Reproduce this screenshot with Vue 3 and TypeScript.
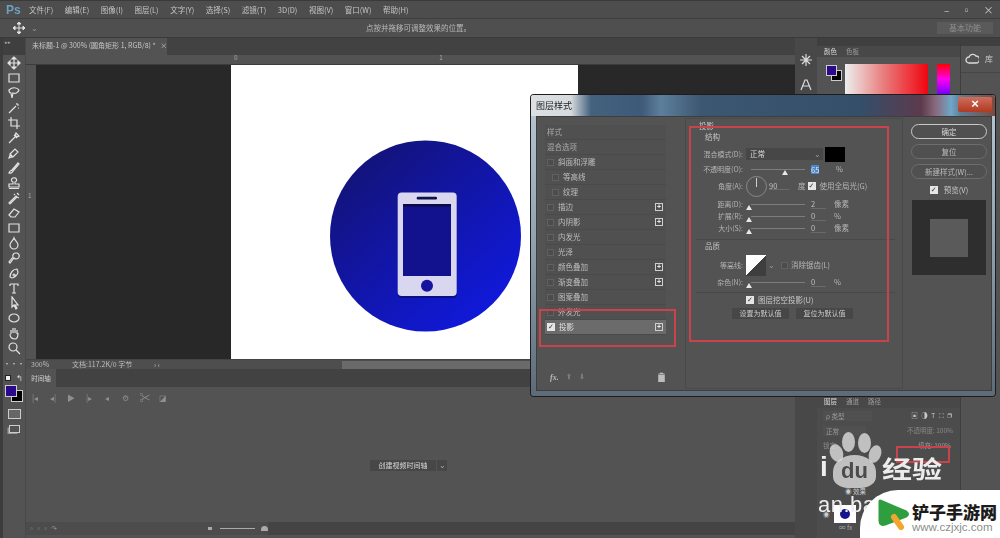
<script setup lang="ts">
const menus = ['文件(F)', '编辑(E)', '图像(I)', '图层(L)', '文字(Y)', '选择(S)', '滤镜(T)', '3D(D)', '视图(V)', '窗口(W)', '帮助(H)']

// toolbar icons, 14x14 viewBox
const tools: string[] = [
  'M7 1v12M1 7h12M7 1l-2 2h4zM7 13l-2-2h4zM1 7l2-2v4zM13 7l-2-2v4z',
  'M2 3h10v8H2z',
  'M2 4c3-3 8-3 10 0-1 3-4 4-6 3l-1 5-1-5C2 7 2 5 2 4z',
  'M2 12l7-7M10 2v2M12 4h-2M12 7h-1',
  'M4 1v9h9M1 4h9v9',
  'M2 12l6-6M7 4l3 3M9 2l3 3-2 1-2-2z',
  'M3 8l5-5 3 3-5 5zM2 12l3-1-2-2z',
  'M2 12c1-3 2-2 3-3l6-7 1 1-6 7c-1 1-1 3-4 2z',
  'M7 2a2 2 0 0 1 1 4v2h4v3H2V8h4V6a2 2 0 0 1 1-4zM2 12.5h10',
  'M2 12l7-7 1 1-7 7zM10 2l2 2M7 3l1 1M12 7l-2-1',
  'M2 9l5-6 5 3-4 5H4z',
  'M2 3h10v8H2z',
  'M7 2c1 3 4 4 4 7a4 4 0 0 1-8 0c0-3 3-4 4-7z',
  'M9 2a3 3 0 1 1-2 5L3 12 2 11l4-5a3 3 0 0 1 3-4z',
  'M3 11c0-4 3-8 7-8l1 3c0 3-4 6-6 6zM7 8a1 1 0 1 0 .1 0',
  'M3 3h8v2M7 3v9M5 12h4M3 3v2',
  'M5 1v10l2-2 2 4 1-1-2-3h3z',
  'M7 3c3 0 5 2 5 4s-2 4-5 4-5-2-5-4 2-4 5-4z',
  'M4 8V4M6 7V2M8 7V2M10 8V4M3 8c0 3 2 5 5 5 2 0 3-2 3-6',
  'M6 2a4 4 0 1 1 0 8 4 4 0 0 1 0-8zM9 9l4 4',
]

const styleRows = [
  { label: '斜面和浮雕', plus: false, sub: false },
  { label: '等高线', plus: false, sub: true },
  { label: '纹理', plus: false, sub: true },
  { label: '描边', plus: true, sub: false },
  { label: '内阴影', plus: true, sub: false },
  { label: '内发光', plus: false, sub: false },
  { label: '光泽', plus: false, sub: false },
  { label: '颜色叠加', plus: true, sub: false },
  { label: '渐变叠加', plus: true, sub: false },
  { label: '图案叠加', plus: false, sub: false },
  { label: '外发光', plus: false, sub: false },
]

const sliders = [
  { label: '距离(D):', value: '2', unit: '像素' },
  { label: '扩展(R):', value: '0', unit: '%' },
  { label: '大小(S):', value: '0', unit: '像素' },
]
</script>

<template>
  <div class="ps">
    <header class="menubar">
      <span class="logo">Ps</span>
      <span v-for="m in menus" :key="m" class="menu">{{ m }}</span>
      <span class="win-btns"><i>–</i><i>▫</i><i>×</i></span>
    </header>

    <div class="options">
      <svg class="opt-move" width="14" height="14" viewBox="0 0 14 14"><path d="M7 1v12M1 7h12M7 1l-2 2h4zM7 13l-2-2h4zM1 7l2-2v4zM13 7l-2-2v4z" stroke="#ddd" fill="#ddd" /></svg>
      <span class="opt-caret">⌄</span>
      <span class="opt-hint">点按并拖移可调整效果的位置。</span>
      <span class="workspace-name">基本功能</span>
    </div>

    <div class="workspace">
      <aside class="toolbar">
        <div class="tool-head">▸▸</div>
        <div v-for="(t, i) in tools" :key="i" class="tool">
          <svg width="14" height="14" viewBox="0 0 14 14"><path :d="t" fill="none" stroke="#e2e2e2" stroke-width="1.2" /></svg>
        </div>
        <div class="tool dots">•••</div>
        <div class="mini-colors"><i class="mini-a"></i><i class="mini-b">↰</i></div>
        <div class="swatches"><i class="bg"></i><i class="fg"></i></div>
        <div class="tool"><span class="mask-ico"></span></div>
        <div class="tool"><span class="screen-ico"></span></div>
      </aside>

      <main class="center">
        <div class="tabbar">
          <div class="doc-tab">未标题-1 @ 300% (圆角矩形 1, RGB/8) * <span class="tab-x">×</span></div>
        </div>
        <div class="h-ruler"><span class="r0">0</span><span class="r1">1</span></div>
        <div class="canvas-row">
          <div class="v-ruler"><span>1</span></div>
          <div class="pasteboard">
            <div class="doc">
              <svg width="347" height="294" viewBox="231 65 347 294">
                <defs>
                  <linearGradient id="disc" x1="0.15" y1="0.1" x2="0.85" y2="0.9">
                    <stop offset="0" stop-color="#131379" />
                    <stop offset="1" stop-color="#1019dc" />
                  </linearGradient>
                </defs>
                <circle cx="425.5" cy="236" r="95.5" fill="url(#disc)" />
                <rect x="398" y="194" width="59" height="104" rx="4" fill="#0a0a50" opacity="0.55" />
                <rect x="397.7" y="192.5" width="59" height="103.5" rx="4" fill="#d9d7ef" />
                <rect x="403" y="204" width="48" height="72" fill="#12128e" />
                <rect x="403" y="204" width="48" height="2.5" fill="#0b0b45" />
                <rect x="416.7" y="196.7" width="20.3" height="2.8" rx="1.2" fill="#10104a" />
                <circle cx="427" cy="285.7" r="6" fill="#1515a0" />
              </svg>
            </div>
          </div>
        </div>
        <div class="statusbar">
          <span class="zoom">300%</span>
          <span class="docinfo">文档:117.2K/0 字节</span>
          <span class="st-arrows">› ‹</span>
          <span class="scroll"></span>
        </div>
        <div class="timeline">
          <div class="tl-tabs"><span class="tl-tab">时间轴</span></div>
          <div class="tl-controls">
            <span>|◂</span><span>◂|</span><span>▶</span><span>|▸</span><span>◂</span><span>⚙</span><span class="sep">✂</span><span>◪</span>
          </div>
          <div class="tl-body">
            <div class="tl-create"><span class="create-btn">创建视频时间轴</span><span class="create-caret">⌄</span></div>
          </div>
          <div class="tl-foot">
            <span class="foot-left">▫▫▫ ↷</span>
            <span class="foot-zoom"><i class="m1"></i><i class="line"></i><i class="m2"></i></span>
            <span class="foot-dark"></span>
          </div>
        </div>
      </main>

      <div class="icon-dock">
        <svg width="14" height="14" viewBox="0 0 14 14"><path d="M7 1v12M1 7h12M3 3l8 8M11 3l-8 8" stroke="#ddd" stroke-width="1.2" /></svg>
        <svg width="14" height="14" viewBox="0 0 14 14"><path d="M2 12L6 2h2l4 10M4 8h6" stroke="#ddd" fill="none" stroke-width="1.2" /></svg>
      </div>

      <section class="panels">
        <div class="color-panel">
          <div class="panel-tabs dark"><span class="on">颜色</span><span>色板</span></div>
          <div class="color-body">
            <div class="color-chips"><i class="chip-bg"></i><i class="chip-fg"></i></div>
            <div class="color-field"></div>
            <div class="hue"></div>
          </div>
        </div>
        <div class="layers-panel">
          <div class="panel-tabs"><span class="on">图层</span><span>通道</span><span>路径</span></div>
          <div class="ly-row"><span class="ly-input">ρ 类型</span><span class="ly-icons">▣ ◑ T ⛶ ❐</span></div>
          <div class="ly-row"><span class="ly-input short">正常</span><span class="ly-dim">不透明度: 100%</span></div>
          <div class="ly-row"><span class="ly-dim">锁定:</span><span class="fill-label">填充: 100%</span></div>
          <div class="ly-list">
            <div class="ly-effect">◉ 效果</div>
            <div class="ly-thumb-row"><span class="eye">◉</span><span class="thumb"><i></i></span></div>
          </div>
          <div class="ly-foot">∞ fx</div>
        </div>
      </section>

      <aside class="library">
        <div class="lib-item">
          <svg width="14" height="12" viewBox="0 0 14 12"><path d="M4 10a3 3 0 0 1 0-6 4 4 0 0 1 7-1 3.500 3.500 0 0 1 0 7z" fill="none" stroke="#ddd" stroke-width="1.3" /></svg>
          <span>库</span>
        </div>
      </aside>
    </div>

    <!-- floating layer style dialog -->
    <div class="dialog">
      <div class="dlg-title">
        <span class="dlg-name">图层样式</span>
        <span class="dlg-close">×</span>
      </div>
      <div class="dlg-body">
        <div class="style-list">
          <div class="style-row head">样式</div>
          <div class="style-row head">混合选项</div>
          <div v-for="r in styleRows" :key="r.label" class="style-row" :class="{ sub: r.sub }">
            <i class="box"></i><span class="style-name">{{ r.label }}</span>
            <i v-if="r.plus" class="plus">+</i>
          </div>
          <div class="style-row active">
            <i class="box checked">✓</i><span class="style-name">投影</span><i class="plus">+</i>
          </div>
          <div class="style-foot">
            <span class="fx">fx.</span><span class="arrow">⬆</span><span class="arrow">⬇</span>
            <svg class="trash" width="9" height="10" viewBox="0 0 9 10"><path d="M1 2h7M3 2V1h3v1M1.500 3h6v7h-6z" fill="#bdbdbd" stroke="#bdbdbd" stroke-width="0.6" /></svg>
          </div>
        </div>

        <div class="settings">
          <div class="legend">投影</div>
          <div class="legend indent">结构</div>

          <div class="row blend">
            <label>混合模式(D):</label>
            <span class="select">正常<em>⌄</em></span>
            <span class="black-swatch"></span>
          </div>
          <div class="row opacity">
            <label>不透明度(O):</label>
            <span class="slider wide"><i class="thumb-mark at-65"></i></span>
            <span class="num selected">65</span>
            <span class="unit">%</span>
          </div>
          <div class="row angle">
            <label>角度(A):</label>
            <span class="dial"><i></i></span>
            <span class="angle-num">90</span>
            <span class="unit deg">度</span>
            <i class="box checked global">✓</i>
            <span class="global-text">使用全局光(G)</span>
          </div>
          <div v-for="s in sliders" :key="s.label" class="row slide">
            <label>{{ s.label }}</label>
            <span class="slider wide"><i class="thumb-mark"></i></span>
            <span class="num">{{ s.value }}</span>
            <span class="unit">{{ s.unit }}</span>
          </div>

          <div class="divider"></div>
          <div class="legend indent">品质</div>

          <div class="row contour">
            <label>等高线:</label>
            <span class="contour-box"></span>
            <span class="contour-caret">⌄</span>
            <i class="box"></i>
            <span class="aa">消除锯齿(L)</span>
          </div>
          <div class="row slide">
            <label>杂色(N):</label>
            <span class="slider wide"><i class="thumb-mark"></i></span>
            <span class="num">0</span>
            <span class="unit">%</span>
          </div>
          <div class="divider thin"></div>
          <div class="knockout"><i class="box checked">✓</i><span>图层挖空投影(U)</span></div>
          <div class="defaults"><span>设置为默认值</span><span>复位为默认值</span></div>
        </div>

        <div class="actions">
          <button type="button" class="primary">确定</button>
          <button type="button">复位</button>
          <button type="button">新建样式(W)...</button>
          <div class="preview-check"><i class="box checked">✓</i><span>预览(V)</span></div>
          <div class="preview"><i></i></div>
        </div>
      </div>
      <i class="mark mark-list"></i>
      <i class="mark mark-settings"></i>
    </div>

    <i class="mark mark-fill"></i>

    <!-- watermarks -->
    <div class="baidu">
      <i class="pad p1"></i><i class="pad p2"></i><i class="pad p3"></i><i class="pad p4"></i><i class="pad palm"></i>
      <span class="bd-i">i</span>
      <span class="bd-du">du</span>
      <span class="bd-jy">经验</span>
      <span class="bd-url">an.bai</span>
    </div>
    <div class="site-card">
      <svg class="site-logo" width="36" height="40" viewBox="0 0 36 40">
        <path d="M4 5l26 11c2 1 2 3 0 4L9 28c-3 1-5 0-5-3z" fill="#2f9e3f" stroke="#2f9e3f" stroke-width="3" stroke-linejoin="round" />
        <path d="M18 21l7 10" stroke="#f4a52e" stroke-width="6" stroke-linecap="round" />
      </svg>
      <div class="site-text">
        <div class="site-name">铲子手游网</div>
        <div class="site-url">www.czjxjc.com</div>
      </div>
    </div>
  </div>
</template>

<style>
html, body { margin: 0; background: #535353; }
</style>

<style scoped>
.ps {
  position: relative;
  width: 1000px;
  height: 538px;
  overflow: hidden;
  display: flex;
  flex-direction: column;
  background: #535353;
  color: #cfcfcf;
  font: 8px/1 "Noto Sans CJK SC", "Noto Sans", sans-serif;
}
i, em { font-style: normal; }

.menubar {
  height: 18px;
  display: flex;
  align-items: center;
  background: #4d4d4d;
  border-top: 1px solid #3a3a3a;
  box-sizing: border-box;
  filter: blur(0.4px);
}
.logo { width: 29px; padding-left: 6px; box-sizing: border-box; font: bold 12px "Liberation Sans", sans-serif; color: #6f9fc0; }
.menu { margin-right: 11.500px; font-size: 7.500px; color: #c4c4c4; white-space: nowrap; }
.win-btns { margin-left: auto; width: 56px; display: flex; gap: 12px; color: #ccc; font-size: 10px; }

.options {
  height: 20px;
  display: flex;
  align-items: center;
  background: #4f4f4f;
  border-top: 1px solid #3e3e3e;
  border-bottom: 1px solid #3a3a3a;
  box-sizing: border-box;
  padding-left: 12px;
  filter: blur(0.4px);
}
.opt-caret { margin-left: 5px; color: #999; }
.opt-hint { margin-left: 328px; color: #b9b9b9; width: 100px; white-space: nowrap; font-size: 7.500px; }
.workspace-name { margin-left: auto; margin-right: 7px; width: 56px; height: 12px; line-height: 12px; text-align: center; background: #5a5a5a; color: #8f8f8f; }

.workspace { flex: 1; display: flex; min-height: 0; }

.toolbar {
  width: 26px;
  box-sizing: border-box;
  border-left: 3px solid #3c3c3c;
  background: #535353;
  display: flex;
  flex-direction: column;
  align-items: center;
  border-right: 1px solid #484848;
}
.tool-head { height: 17px; width: 100%; background: #3f3f3f; color: #aaa; font-size: 5px; line-height: 8px; padding-left: 2px; box-sizing: border-box; margin-bottom: 0; }
.tool { height: 15px; display: flex; align-items: center; justify-content: center; flex: none; filter: blur(0.35px); }
.dots { color: #ddd; font-size: 7px; letter-spacing: 0; margin-top: 1px; }
.mini-colors { height: 12px; width: 18px; display: flex; justify-content: space-between; align-items: center; margin-top: 1px; }
.mini-a { width: 6px; height: 6px; background: #eee; border: 1px solid #222; box-sizing: border-box; }
.mini-b { color: #ddd; font-size: 8px; }
.swatches { position: relative; width: 18px; height: 18px; flex: none; margin: 1px 0 3px; }
.swatches .fg { position: absolute; left: 0; top: 0; width: 10px; height: 10px; background: #2a0a8a; border: 1px solid #ccc; }
.swatches .bg { position: absolute; left: 6px; top: 5px; width: 10px; height: 10px; background: #000; border: 1px solid #ccc; }
.mask-ico { width: 11px; height: 8px; border: 1px solid #ccc; background: #666; }
.screen-ico { width: 9px; height: 6px; border: 1px solid #ccc; box-shadow: -2px 2px 0 -0.5px #999; }

.center { width: 769px; display: flex; flex-direction: column; min-width: 0; }
.tabbar { height: 17px; background: #424242; display: flex; align-items: flex-end; }
.doc-tab { height: 17px; width: 141px; box-sizing: border-box; padding: 4px 0 0 6px; background: #535353; color: #c5c5c5; font-size: 7px; white-space: nowrap; filter: blur(0.4px); }
.tab-x { margin-left: 3px; }
.h-ruler { height: 10px; background: #535353; border-bottom: 1px solid #3c3c3c; box-sizing: border-box; display: flex; font-size: 6px; color: #aaa; }
.r0 { margin-left: 208px; }
.r1 { margin-left: 202px; }
.canvas-row { height: 294px; display: flex; }
.v-ruler { width: 10px; background: #535353; color: #aaa; font-size: 6px; padding-top: 128px; box-sizing: border-box; padding-left: 2px; }
.pasteboard { flex: 1; background: #282828; padding-left: 195px; }
.doc { width: 347px; height: 294px; background: #fff; }
.doc svg { display: block; }

.statusbar { height: 10px; display: flex; align-items: center; background: #4e4e4e; border-top: 1px solid #444; box-sizing: border-box; color: #bdbdbd; font-size: 7px; filter: blur(0.25px); }
.zoom { margin-left: 5px; width: 41px; }
.docinfo { width: 82px; white-space: nowrap; }
.st-arrows { width: 188px; font-size: 7px; padding-left: 0; }
.scroll { width: 192px; height: 8px; background: #6a6a6a; }

.timeline { flex: 1; display: flex; flex-direction: column; background: #535353; min-height: 0; }
.tl-tabs { height: 18px; background: #424242; display: flex; }
.tl-tab { width: 30px; text-align: center; line-height: 18px; background: #535353; color: #d0d0d0; font-size: 6.500px; filter: blur(0.3px); }
.tl-controls { height: 21px; display: flex; align-items: center; color: #8f8f8f; font-size: 8px; filter: blur(0.3px); }
.tl-controls span { width: 18px; text-align: center; flex: none; white-space: nowrap; }
.tl-controls .sep { margin-left: 2px; font-size: 11px; }
.tl-body { flex: 1; display: flex; align-items: flex-start; padding: 52px 0 0 344px; }
.tl-create { display: flex; height: 11px; filter: blur(0.3px); }
.create-btn { width: 66px; line-height: 11px; text-align: center; background: #474747; color: #d6d6d6; font-size: 7px; }
.create-caret { width: 10px; margin-left: 1px; line-height: 9px; text-align: center; background: #474747; color: #aaa; }
.tl-foot { height: 13px; margin-bottom: 3px; display: flex; align-items: center; background: #4c4c4c; color: #999; font-size: 7px; }
.foot-left { width: 150px; padding-left: 2px; box-sizing: border-box; }
.foot-zoom { width: 92px; display: flex; align-items: center; }
.foot-zoom .m1 { width: 6px; height: 3px; background: #aaa; margin: 0 8px 0 32px; }
.foot-zoom .line { width: 49px; height: 1px; background: #aaa; }
.foot-zoom .m2 { width: 10px; height: 5px; background: #aaa; margin-left: 6px; border-radius: 5px 5px 0 0; }
.foot-dark { flex: 1; height: 13px; background: #444; }

.icon-dock { width: 22px; background: #484848; display: flex; flex-direction: column; align-items: center; gap: 11px; padding-top: 15px; box-sizing: border-box; filter: blur(0.3px); }
.panels { width: 143px; display: flex; flex-direction: column; justify-content: space-between; background: #3a3a3a; }
.panel-tabs { height: 13px; display: flex; gap: 9px; align-items: center; padding-left: 7px; background: #484848; color: #9c9c9c; font-size: 6.500px; filter: blur(0.3px); }
.panel-tabs .on { color: #ddd; }
.panel-tabs.dark { height: 19px; align-items: flex-end; padding-bottom: 3px; box-sizing: border-box; background: linear-gradient(#3f3f3f 8px, #484848 8px); }
.color-panel { height: 60px; background: #535353; }
.color-body { display: flex; padding: 7px 0 0 9px; height: 41px; box-sizing: border-box; position: relative; }
.color-chips { position: relative; width: 19px; }
.chip-bg { position: absolute; left: 5px; top: 6px; width: 9px; height: 9px; background: #000; border: 1px solid #ccc; }
.chip-fg { position: absolute; left: 0; top: 1px; width: 9px; height: 9px; background: #2a0a8a; border: 1px solid #ccc; }
.color-field { width: 83px; height: 30px; margin-top: 0; background: linear-gradient(90deg, #eee 0%, #e98080 45%, #f00510 100%); }
.hue { width: 13px; height: 30px; margin-left: 9px; background: linear-gradient(180deg, #f00 0%, #f0e 50%, #70f 100%); }
.layers-panel { height: 143px; background: #4c4c4c; display: flex; flex-direction: column; font-size: 6.500px; color: #999; }
.ly-row { height: 15px; display: flex; align-items: center; justify-content: space-between; padding: 0 7px 0 6px; filter: blur(0.3px); }
.ly-input { width: 46px; height: 10px; line-height: 10px; padding-left: 3px; background: #505050; }
.ly-input.short { width: 40px; }
.ly-icons { color: #c8c8c8; letter-spacing: 1px; }
.ly-dim { color: #888; }
.fill-label { margin-right: 2px; color: #9a9a9a; }
.ly-list { flex: 1; padding-top: 35px; }
.ly-effect { margin-left: 28px; color: #ccc; height: 16px; }
.ly-thumb-row { display: flex; align-items: center; gap: 4px; padding-left: 6px; height: 20px; color: #ccc; }
.thumb { width: 22px; height: 18px; background: #fff; display: flex; align-items: center; justify-content: center; }
.thumb i { width: 10px; height: 10px; border-radius: 50%; background: #14148e; }
.ly-foot { height: 14px; padding-left: 22px; color: #aaa; }

.library { width: 40px; background: #535353; border-left: 1px solid #3e3e3e; box-sizing: border-box; border-top: 8px solid #3f3f3f; }
.lib-item { height: 26px; display: flex; align-items: center; gap: 6px; padding: 0 0 0 4px; color: #ccc; border-bottom: 1px solid #464646; filter: blur(0.3px); }

/* dialog */
.dialog {
  position: absolute;
  left: 531px;
  top: 95px;
  width: 464px;
  height: 301px;
  box-sizing: border-box;
  padding: 0 3px 5px 5px;
  display: flex;
  flex-direction: column;
  border-radius: 3px;
  background: linear-gradient(180deg, #b9c8d4 0%, #8fa0af 50%, #5d6b78 100%);
  box-shadow: 0 0 0 1px #1d1d1d;
}
.dlg-title {
  height: 21px;
  flex: none;
  margin: 0 -3px 0 -5px;
  padding-left: 5px;
  display: flex;
  align-items: center;
  border-radius: 3px 3px 0 0;
  background: linear-gradient(90deg, #dce0e3 0, #d5dade 40px, #44617e 60px, #3d5a78 110px, #5d7f9c 130px, #3c5771 170px, #354e6a 330px, #5c3a4c 390px, #8a6a7e 405px, #6fa6c8 420px, #5c7e96 430px, #7a4a42 464px);
  filter: blur(0.4px);
}
.dlg-name { color: #1f1f1f; font-size: 9px; }
.dlg-close {
  position: absolute;
  right: 3px;
  top: 2px;
  width: 34px;
  height: 15px;
  line-height: 14px;
  text-align: center;
  color: #fff;
  font: bold 13px/14px "Liberation Sans", sans-serif;
  background: linear-gradient(180deg, #cf6d5c, #b03a20);
  border-radius: 2px;
}
.dlg-body {
  flex: 1;
  min-height: 0;
  display: flex;
  background: #535353;
  padding: 1px 0 0 8px;
  border: 1px solid #3e3e3e;
  box-sizing: border-box;
}

.style-list { width: 121px; flex: none; display: flex; flex-direction: column; margin: 7px 19px 0 0; filter: blur(0.35px); }
.style-row {
  height: 15px;
  flex: none;
  display: flex;
  align-items: center;
  box-sizing: border-box;
  padding-left: 2px;
  background: #505050;
  border-bottom: 1px solid #4a4a4a;
  color: #bdbdbd;
  font-size: 7.500px;
}
.style-row.head { padding-left: 2px; color: #aaa; }
.style-row.sub { padding-left: 7px; }
.style-row.active { background: #6b6b6b; color: #e0e0e0; }
.style-name { margin-left: 4px; }
.box { width: 7px; height: 7px; flex: none; background: #4c4c4c; border: 1px solid #616161; box-sizing: border-box; display: inline-block; }
.box.checked { width: 8px; height: 8px; background: #e6e6e6; border-color: #e6e6e6; color: #333; font: bold 7px/7px "DejaVu Sans", sans-serif; text-align: center; }
.plus { margin-left: auto; margin-right: 3px; width: 8px; height: 8px; border: 1px solid #cfcfcf; box-sizing: border-box; color: #e8e8e8; font: bold 7px/6px "Liberation Sans", sans-serif; text-align: center; }
.style-foot { margin-top: 37px; display: flex; align-items: center; gap: 7px; padding-left: 5px; color: #bbb; font: italic bold 8px "Liberation Serif", serif; }
.arrow { color: #7b7b7b; font-size: 7px; font-style: normal; }
.trash { margin-left: auto; margin-right: 0; }

.settings {
  width: 218px;
  height: 271px;
  flex: none;
  box-sizing: border-box;
  padding: 1px 10px 0 13px;
  margin-right: 8px;
  border: 1px solid #4a4a4a;
  display: flex;
  flex-direction: column;
  font-size: 7.500px;
  color: #b5b5b5;
  filter: blur(0.3px);
}
.legend { height: 11px; line-height: 11px; color: #c9c9c9; flex: none; }
.legend.indent { margin-left: 6px; color: #c4c4c4; }
.row { display: flex; align-items: center; flex: none; }
.row label { width: 44px; margin-right: 3px; text-align: right; white-space: nowrap; flex: none; font-size: 7px; }
.blend { height: 16px; margin-top: 4px; }
.select { width: 77px; height: 12px; line-height: 12px; padding-left: 4px; box-sizing: border-box; background: #474747; color: #d8d8d8; display: flex; justify-content: space-between; }
.select em { margin-right: 2px; color: #999; }
.black-swatch { width: 20px; height: 15px; margin-left: 2px; background: #000; }
.opacity { height: 14px; }
.slider { position: relative; display: block; height: 1px; background: #7d7d7d; flex: none; }
.slider.wide { width: 54px; margin-left: 5px; }
.thumb-mark { position: absolute; left: -5px; top: 1px; width: 0; height: 0; border-left: 3px solid transparent; border-right: 3px solid transparent; border-bottom: 5px solid #e8e8e8; }
.thumb-mark.at-65 { left: 31px; }
.num { width: 15px; margin-left: 6px; border-bottom: 1px solid #6a6a6a; color: #c0c0c0; height: 9px; line-height: 9px; flex: none; }
.num.selected { width: 8px; background: #4a86c8; color: #dfe8f5; border: 0; margin-right: 7px; }
.unit { margin-left: 8px; white-space: nowrap; }
.num.selected + .unit { margin-left: 10px; }
.angle { height: 20px; }
.dial { position: relative; width: 21px; height: 21px; box-sizing: border-box; border: 1px solid #8a8a8a; border-radius: 50%; flex: none; }
.dial i { position: absolute; left: 9px; top: 1px; width: 1px; height: 9px; background: #cfcfcf; }
.angle-num { width: 20px; margin-left: 2px; border-bottom: 1px solid #6a6a6a; color: #c0c0c0; flex: none; }
.unit.deg { margin-left: 9px; }
.box.global { margin-left: 2px; }
.global-text { margin-left: 4px; white-space: nowrap; }
.slide { height: 12px; }
.angle + .slide { margin-top: 2px; }
.divider { height: 1px; background: #494949; margin: 5px -3px 0 -3px; flex: none; }
.contour { height: 22px; margin-top: 3px; }
.contour-box { width: 20px; height: 21px; flex: none; background: linear-gradient(to top left, #3e3e3e 50%, #fff 50%); }
.contour-caret { width: 9px; color: #999; margin-left: 1px; text-align: center; }
.contour .box { margin-left: 5px; }
.aa { margin-left: 3px; white-space: nowrap; }
.divider.thin { margin-top: 4px; }
.knockout { height: 10px; margin: 2px 0 0 47px; display: flex; align-items: center; gap: 4px; white-space: nowrap; flex: none; color: #c8c8c8; }
.defaults { display: flex; gap: 7px; margin: 3px 0 0 33px; flex: none; }
.defaults span { width: 57px; height: 11px; line-height: 11px; text-align: center; background: #474747; color: #cacaca; font-size: 7px; }

.actions { width: 76px; flex: none; display: flex; flex-direction: column; padding-top: 6px; }
.actions button {
  height: 15px;
  margin-bottom: 5px;
  padding: 0;
  background: #505050;
  color: #bcbcbc;
  border: 1px solid #6d6d6d;
  border-radius: 8px;
  font: 7.500px/1 "Noto Sans CJK SC", sans-serif;
  filter: blur(0.25px);
}
.actions button.primary { border-color: #c9c9c9; color: #d5d5d5; }
.preview-check { height: 12px; display: flex; align-items: center; justify-content: center; gap: 6px; font-size: 7.500px; color: #c8c8c8; margin: 0 0 4px; filter: blur(0.25px); }
.preview { width: 74px; height: 75px; margin-left: 1px; background: #2e2e2e; display: flex; align-items: center; justify-content: center; }
.preview i { width: 38px; height: 38px; background: #5a5a5a; }

/* red annotation frames */
.mark { position: absolute; border: 2px solid #c9434a; box-sizing: border-box; pointer-events: none; }
.mark-list { left: 8px; top: 214px; width: 137px; height: 38px; }
.mark-settings { left: 158px; top: 31px; width: 200px; height: 216px; }
.mark-fill { left: 896px; top: 446px; width: 54px; height: 17px; }

/* watermarks */
.baidu { position: absolute; left: 0; top: 0; width: 1000px; height: 538px; pointer-events: none; filter: blur(0.3px); }
.pad { position: absolute; background: rgba(225, 225, 225, 0.78); border-radius: 50%; }
.p1 { left: 830px; top: 444px; width: 13px; height: 18px; transform: rotate(-20deg); }
.p2 { left: 842px; top: 432px; width: 13px; height: 20px; }
.p3 { left: 858px; top: 433px; width: 13px; height: 20px; }
.p4 { left: 869px; top: 445px; width: 12px; height: 18px; transform: rotate(20deg); }
.palm { left: 833px; top: 455px; width: 43px; height: 33px; border-radius: 50% 50% 35% 35%; }
.bd-i { position: absolute; left: 820px; top: 453px; color: #eee; font: bold 28px/1 "Liberation Sans", sans-serif; }
.bd-du { position: absolute; left: 841px; top: 460px; color: #4b4b4b; font: bold 22px/1 "Liberation Sans", sans-serif; }
.bd-jy { position: absolute; left: 882px; top: 456px; color: #ececec; font: bold 30px/1 "Noto Sans CJK SC", sans-serif; transform: scaleY(0.8); transform-origin: left top; }
.bd-url { position: absolute; left: 818px; top: 494px; color: #eee; font: 22px/1 "Liberation Sans", sans-serif; letter-spacing: 0.5px; }

.site-card {
  position: absolute;
  left: 860px;
  top: 490px;
  width: 140px;
  height: 48px;
  box-sizing: border-box;
  padding: 6px 0 0 16px;
  display: flex;
  background: #fff;
  border-radius: 38px 0 0 0;
}
.site-logo { flex: none; }
.site-name { color: #1c1c1c; font: 900 17px/17px "Noto Sans CJK SC", sans-serif; margin-top: 7px; white-space: nowrap; }
.site-url { color: #8a8f8a; font: 11.500px/12px "Liberation Sans", sans-serif; white-space: nowrap; margin-top: 1px; }
</style>
